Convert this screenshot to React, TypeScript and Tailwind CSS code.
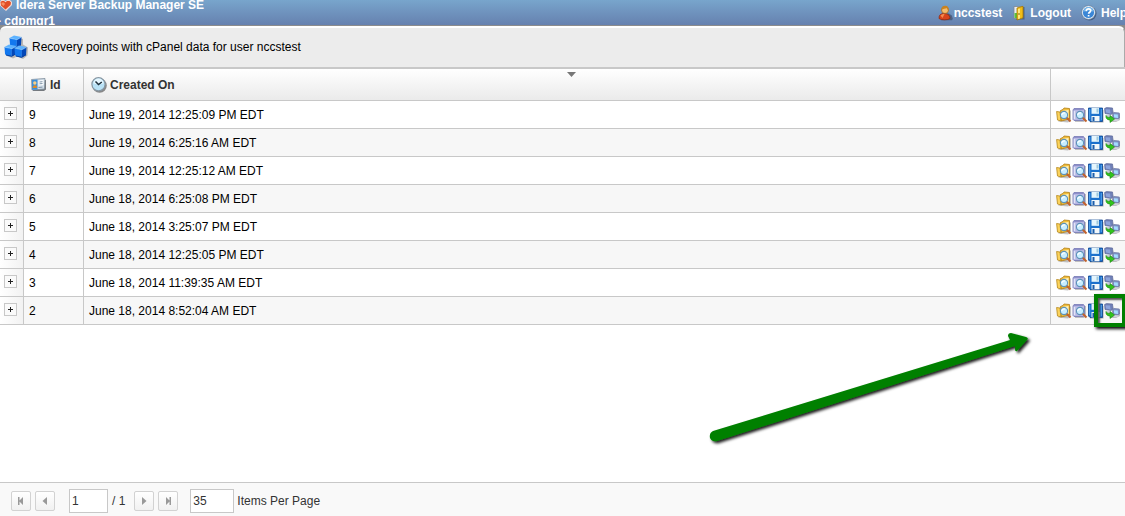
import React from "react";

interface RecoveryPoint {
  id: number;
  createdOn: string;
}

const recoveryPoints: RecoveryPoint[] = [
  { id: 9, createdOn: "June 19, 2014 12:25:09 PM EDT" },
  { id: 8, createdOn: "June 19, 2014 6:25:16 AM EDT" },
  { id: 7, createdOn: "June 19, 2014 12:25:12 AM EDT" },
  { id: 6, createdOn: "June 18, 2014 6:25:08 PM EDT" },
  { id: 5, createdOn: "June 18, 2014 3:25:07 PM EDT" },
  { id: 4, createdOn: "June 18, 2014 12:25:05 PM EDT" },
  { id: 3, createdOn: "June 18, 2014 11:39:35 AM EDT" },
  { id: 2, createdOn: "June 18, 2014 8:52:04 AM EDT" },
];

const LogoIcon = () => (
  <svg width="12" height="16" viewBox="0 0 12 16" className="shrink-0">
    <path d="M0 5l1-2h3l1.500 1L7 3h3l2 2v3l-6 6-6-5.500z" fill="#f3d9d2" />
    <path d="M.5 5L2 4h2l1.500 1.200L7 4h2.500L11 5.500 10.500 8 5.500 12.500 1 8.500z" fill="#e04e26" />
    <path d="M1.500 5.500h2.500l1 1.500-1.500 2-2-1.500z" fill="#f88f60" />
  </svg>
);

const UserIcon = () => (
  <svg width="16" height="16" viewBox="0 0 16 16" className="shrink-0">
    <path d="M3 15.300h11l.8-1.500-1-3.300-3-2H6z" fill="#35465f" opacity=".6" />
    <path d="M1 13.500c0-3.500 1.500-5 5-5s6 1.500 6 5c-2 1.800-9 1.800-11 0z" fill="#d8441b" stroke="#8e2208" strokeWidth=".7" />
    <path d="M2.500 10.500c1-1.300 3-1.500 4-1.500l-2 4z" fill="#f58a4d" />
    <circle cx="7" cy="5" r="3.500" fill="#f5bd6d" stroke="#9a5a14" strokeWidth=".7" />
    <path d="M3.500 4.800C3.500 1.500 5.500.8 7.500.8s3.500 1.500 3.200 4.500C9.500 5 9 3.500 8.500 3c-1 1-3.500.7-5 1.800z" fill="#c98320" />
  </svg>
);

const LogoutIcon = () => (
  <svg width="14" height="16" viewBox="0 0 14 16" className="shrink-0">
    <path d="M3 2h9.500v12.500H4z" fill="#42536c" opacity=".7" />
    <path d="M2 1.500h8v12H2z" fill="#e9edf0" stroke="#7d8791" strokeWidth=".8" />
    <path d="M2.500 8h2.500v5H2.500z" fill="#57c33f" />
    <path d="M5 3l6-1.700v11.500L5 15z" fill="#f0bd18" stroke="#a67800" strokeWidth=".8" />
    <path d="M6 4l2-.6v10l-2 .6z" fill="#ffe67c" />
    <circle cx="7" cy="9" r=".8" fill="#765500" />
  </svg>
);

const HelpIcon = () => (
  <svg width="16" height="16" viewBox="0 0 16 16" className="shrink-0">
    <circle cx="8.500" cy="8.500" r="7" fill="#2c3f60" opacity=".6" />
    <circle cx="7.500" cy="7.500" r="6.900" fill="#eef6fd" stroke="#56718f" strokeWidth=".7" />
    <circle cx="7.500" cy="7.500" r="5.600" fill="#3a86d6" />
    <path d="M2.500 7a5 5 0 0110 0c-3-2-7-2-10 0z" fill="#77b7ea" />
    <path d="M5.300 6.200c0-3.200 4.400-2.800 4.400-.4 0 1.400-2.100 1.500-2.100 3M7.600 10v1.600" fill="none" stroke="#fff" strokeWidth="1.700" />
  </svg>
);

const Cube = ({ x, y }: { x: number; y: number }) => (
  <g transform={`translate(${x} ${y})`}>
    <path d="M.5 3L8 4.500l-.3 8L2 11.300 1 10z" fill="#1277ee" />
    <path d="M8 4.500L12.500 2 12 10l-4.300 2.500z" fill="#0347b8" />
    <path d="M.5 3L5 .5l7.500 1.500L8 4.500z" fill="#5db2ff" />
    <path d="M.7 3.200L8 4.700l4.300-2.400" fill="none" stroke="#94d0ff" strokeWidth=".6" />
    <path d="M2 11l5.700 1.300L12 9.800" fill="none" stroke="#033a98" strokeWidth=".9" />
  </g>
);

const CubesIcon = () => (
  <svg width="24" height="24" viewBox="0 0 24 24" className="shrink-0">
    <path d="M3 21l6 2.500 4-2 6 2.500 4.500-3.500.5-8-5-3V4l-3-1z" fill="#666" opacity=".4" />
    <Cube x={5} y={0} />
    <Cube x={0} y={9} />
    <Cube x={10} y={10} />
  </svg>
);

const IdCardIcon = () => (
  <svg width="16" height="16" viewBox="0 0 16 16" className="shrink-0">
    <path d="M2 4l13-1v9.500L13 14H2z" fill="#75797e" />
    <path d="M.5 2.500L14 1.500 13.500 12 1 13z" fill="#d3dfe9" stroke="#7c8b99" strokeWidth=".8" />
    <path d="M1 3l5.500-.5v10L1 12.800z" fill="#3c8ed9" />
    <circle cx="3.800" cy="6" r="1.700" fill="#f7cf86" />
    <path d="M1.600 11c0-3.500 4.500-3.500 4.500-.3z" fill="#e58a1e" />
    <path d="M7.500 3.500l5-.4v5l-5 .4z" fill="#fafdff" />
    <path d="M8.500 5l3-.3M8.500 6.800l3-.3M7.500 10.500l4-.4" stroke="#8094a8" />
  </svg>
);

const ClockIcon = () => (
  <svg width="16" height="16" viewBox="0 0 16 16" className="shrink-0">
    <circle cx="8.600" cy="8.600" r="7.200" fill="#666" opacity=".75" />
    <circle cx="7.500" cy="7.300" r="6.600" fill="#b9e2f6" stroke="#8696a2" strokeWidth="1.200" />
    <path d="M2.500 6.500a5 5 0 0110 0c-3 1-7 1-10 0z" fill="#e6f7ff" />
    <path d="M4.500 4.500l3 3 3.300-2.500" fill="none" stroke="#1d2f3b" strokeWidth="1.500" />
  </svg>
);

const Magnifier = () => (
  <g>
    <path d="M10.500 10.500l4 4" stroke="#c2622d" strokeWidth="2" />
    <circle cx="8" cy="8" r="3.600" fill="#c9eeff" stroke="#5d93b8" strokeWidth="1.100" />
    <path d="M5.800 8c.2-1.700 1.500-2.400 3.200-2" stroke="#fff" strokeWidth="1.200" fill="none" />
  </g>
);

const BrowseIcon = () => (
  <svg width="16" height="16" viewBox="0 0 16 16">
    <path d="M2 14.500l10 1 3-2V3z" fill="#888" opacity=".5" />
    <path d="M4.500 3.500L7 2.500l1-1.500 5.500.5V12l-8.500 2z" fill="#f2bf3c" stroke="#b07b10" strokeWidth=".8" />
    <path d="M6 4l6.500-1v8H6z" fill="#fff2bd" />
    <path d="M.6 4.500l3.400.5 1 9-3.500-1z" fill="#fbd35c" stroke="#b4861a" strokeWidth=".8" />
    <Magnifier />
  </svg>
);

const SearchIcon = () => (
  <svg width="16" height="16" viewBox="0 0 16 16">
    <path d="M3 3h11v10l-2 2H3z" fill="#888" opacity=".5" />
    <path d="M1 3l1-1.500h9.500l1 1.500v9.500l-1.500 1H2l-1-1z" fill="#b6b8e4" stroke="#7376b2" strokeWidth=".8" />
    <path d="M1.500 2.800L2.500 1.700h8.500l1 1.100z" fill="#7f82c0" />
    <path d="M2.500 4v8" stroke="#e3e4f7" strokeWidth="1.500" />
    <Magnifier />
  </svg>
);

const SaveIcon = () => (
  <svg width="16" height="16" viewBox="0 0 16 16">
    <path d="M2 3h13.500v12.500H2z" fill="#777" opacity=".6" />
    <path d="M.5 1h14v13.500H2L.5 13z" fill="#1b70cc" stroke="#0b4590" strokeWidth=".8" />
    <path d="M3.500.8h7.500v6H3.500z" fill="#e4f5fd" />
    <path d="M8.500 1.500h2v4h-2z" fill="#9cc7dd" />
    <path d="M3.500 9h8v5.300h-8z" fill="#f2f7fa" />
    <path d="M4.500 10h2v4h-2z" fill="#1b5dab" />
    <path d="M1.700 2v10M13.300 2v11" stroke="#56a5ee" />
  </svg>
);

const RestoreIcon = () => (
  <svg width="16" height="16" viewBox="0 0 16 16">
    <path d="M2 8l6 1 1-6 1 4h6v6l-4 2H7z" fill="#777" opacity=".45" />
    <path d="M.6 1.500L2.500.6l6 .4.500 5L7 7.500l-6-1z" fill="#7080b7" stroke="#5b689a" strokeWidth=".7" />
    <path d="M1.500 2.200l4.500.4.500 3.800-4.500-.8z" fill="#8da4dc" />
    <path d="M2.500 7.500l4 .4-.5 1.500H3z" fill="#c9cbdb" />
    <path d="M8.800 6.500l1.200-1 5.300.5.200 5-1.500 1-5-.8z" fill="#7f91c4" stroke="#65739f" strokeWidth=".7" />
    <path d="M9.800 7.200l4 .4.200 3.300-3.800-.5z" fill="#a4dcff" />
    <path d="M9.500 12.500l5-.2-.5 1.500-3.500.5z" fill="#d1d2de" />
    <path d="M2 8.500c.8 1.500 2 2 4 2V8.500l4.500 3.500-4.500 3.500V13c-3 0-4.500-2-4-4.500z" fill="#32c41c" stroke="#188c10" strokeWidth=".6" />
  </svg>
);

const rowActions = [
  { label: "Browse", Icon: BrowseIcon },
  { label: "Search", Icon: SearchIcon },
  { label: "Save", Icon: SaveIcon },
  { label: "Restore", Icon: RestoreIcon },
];

interface PagerButtonProps {
  label: string;
  path: string;
}

const PagerButton: React.FC<PagerButtonProps> = ({ label, path }) => (
  <button
    aria-label={label}
    className="flex size-5 items-center justify-center rounded-xs border border-[#d2d2d2] bg-linear-to-b from-white to-[#f1f1f1]"
  >
    <svg width="8" height="8" viewBox="0 0 8 8">
      <path d={path} fill="#999" />
    </svg>
  </button>
);

const App: React.FC = () => {
  return (
    <div className="flex min-h-screen flex-col overflow-hidden bg-white font-['Liberation_Sans',Arial,sans-serif] text-xs text-black">
      <header className="flex h-[25px] items-center justify-between overflow-hidden bg-linear-to-b from-[#78a5cc] to-[#6681af] font-bold whitespace-nowrap text-white">
        <div className="leading-4">
          <div className="flex items-center gap-1">
            <LogoIcon />
            <h1>Idera Server Backup Manager SE</h1>
          </div>
          <div className="-ml-[3px]">- cdpmgr1</div>
        </div>
        <nav className="-mr-0.5 flex items-center gap-2.5">
          <a href="#user" className="flex items-center">
            <UserIcon />
            nccstest
          </a>
          <a href="#logout" className="flex items-center gap-1">
            <LogoutIcon />
            Logout
          </a>
          <a href="#help" className="flex items-center gap-1">
            <HelpIcon />
            Help
          </a>
        </nav>
      </header>

      <div className="border-t border-[#8c8c8c] bg-[#8c8c8c]">
        <div className="flex h-[41px] items-center gap-1 rounded-t-md border-t-2 border-r border-r-[#aaa] border-t-white bg-[#ececec] px-1 pb-0.5">
          <CubesIcon />
          <h2>Recovery points with cPanel data for user nccstest</h2>
        </div>
      </div>

      <main className="relative flex-1">
        <table className="w-full table-fixed border-separate border-spacing-0 border-t-2 border-[#c8c8c8]">
          <colgroup>
            <col className="w-6" />
            <col className="w-[60px]" />
            <col />
            <col className="w-[74px]" />
          </colgroup>
          <thead>
            <tr className="h-8 bg-linear-to-b from-white to-[#eaeaea] text-left text-[#333]">
              <th className="border-r border-b border-[#c8c8c8]" />
              <th className="border-r border-b border-[#c8c8c8] px-[7px]">
                <div className="flex items-center gap-[3px]">
                  <IdCardIcon />
                  Id
                </div>
              </th>
              <th className="relative border-r border-b border-[#c8c8c8] px-[7px]">
                <div className="flex items-center gap-[3px]">
                  <ClockIcon />
                  Created On
                </div>
                <svg width="9" height="5" viewBox="0 0 9 5" className="absolute top-[3px] left-1/2">
                  <path d="M0 0h9L4.500 5z" fill="#777" />
                </svg>
              </th>
              <th className="border-b border-[#c8c8c8]" />
            </tr>
          </thead>
          <tbody>
            {recoveryPoints.map((point, index) => (
              <tr key={point.id} className="h-7 even:bg-[#f7f7f7]">
                <td className="border-r border-b border-[#c8c8c8] bg-linear-to-r from-white to-[#f2f2f2] px-1 pb-0.5">
                  <button
                    aria-label="Expand"
                    className="flex size-[13px] items-center justify-center border border-[#c8c8c8] bg-[#fafafa]"
                  >
                    <svg width="5" height="5" viewBox="0 0 5 5">
                      <path d="M0 2h5v1H0zM2 0h1v5H2z" fill="#222" />
                    </svg>
                  </button>
                </td>
                <td className="border-r border-b border-[#c8c8c8] px-[5px]">{point.id}</td>
                <td className="border-r border-b border-[#c8c8c8] px-[5px]">{point.createdOn}</td>
                <td className="border-b border-[#c8c8c8] px-[5px]">
                  <div className="flex">
                    {rowActions.map(({ label, Icon }) => (
                      <button key={label} aria-label={label} className="relative size-4">
                        <Icon />
                        {/* callout around the restore action of the last row */}
                        {label === "Restore" && index === recoveryPoints.length - 1 && (
                          <span className="absolute -top-[9px] -left-2.5 h-[33px] w-8 border-4 border-[#008000] shadow-[2px_2px_3px_#000,inset_2px_2px_2px_#555]" />
                        )}
                      </button>
                    ))}
                  </div>
                </td>
              </tr>
            ))}
          </tbody>
        </table>

        <svg width="332" height="120" viewBox="0 0 332 120" className="absolute top-[261px] right-[88px]">
          <defs>
            <filter id="arrowShadow" x="-10%" y="-10%" width="120%" height="130%">
              <feDropShadow dx="2" dy="2" stdDeviation="1.500" floodColor="#000" floodOpacity=".9" />
            </filter>
          </defs>
          <path
            d="M8 103L305 12l-2-4q0-3 3-3l15 4q3 1 1 3l-10 11q-2 1-2-2v-3L12 113q-5 1-7-3-1-5 3-7z"
            fill="#008000"
            filter="url(#arrowShadow)"
          />
        </svg>
      </main>

      <footer className="flex items-center border-t border-[#c8c8c8] bg-[#f9f9f9] pt-1.5 pb-[3px] pl-[11px] text-[#333]">
        <div className="flex gap-1">
          <PagerButton label="First page" path="M1 0h1.500v3.500L6 0v8L2.500 4.500V8H1z" />
          <PagerButton label="Previous page" path="M6 0v8L1.500 4z" />
        </div>
        <input
          aria-label="Page"
          defaultValue="1"
          className="ml-3.5 h-6 w-[39px] border border-[#c8c8c8] bg-white px-0.5"
        />
        <span className="mx-1">/ 1</span>
        <div className="ml-[5px] flex gap-1">
          <PagerButton label="Next page" path="M2 0v8l4.500-4z" />
          <PagerButton label="Last page" path="M7 0H5.500v3.500L2 0v8l3.500-3.500V8H7z" />
        </div>
        <input
          id="pageSize"
          defaultValue="35"
          className="ml-3 h-6 w-11 border border-[#c8c8c8] bg-white px-0.5"
        />
        <label htmlFor="pageSize" className="ml-[3px]">
          Items Per Page
        </label>
      </footer>
    </div>
  );
};

export default App;
